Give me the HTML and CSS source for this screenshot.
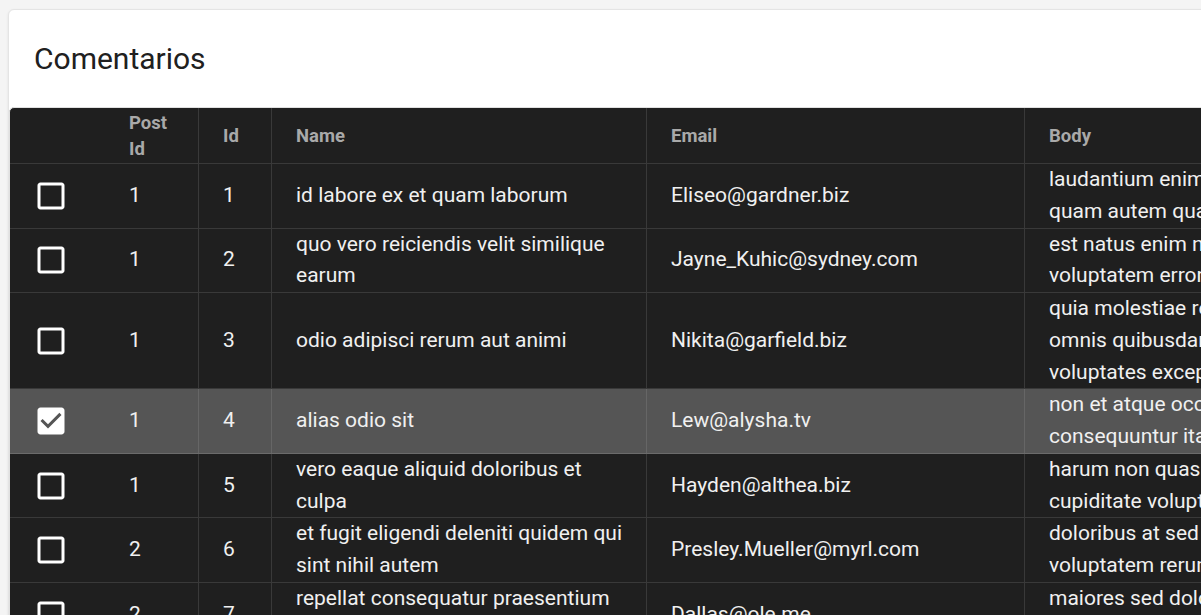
FILE: index.html
```html
<!DOCTYPE html>
<html lang="es">
<head>
<meta charset="utf-8">
<title>Comentarios</title>
<link rel="stylesheet" href="styles.css">
</head>
<body>
<div class="card">
  <div class="card-header"><h1 class="title">Comentarios</h1></div>
  <div class="grid">
    <div class="row head">
      <div class="cell check"></div>
      <div class="cell">Post Id</div>
      <div class="cell sep">Id</div>
      <div class="cell sep">Name</div>
      <div class="cell sep">Email</div>
      <div class="cell sep">Body</div>
    </div>

    <div class="row">
      <div class="cell check"><svg class="cb" viewBox="0 0 24 24"><path d="M19 5v14H5V5h14m0-2H5c-1.11 0-2 .9-2 2v14c0 1.1.89 2 2 2h14c1.1 0 2-.9 2-2V5c0-1.1-.9-2-2-2z"/></svg></div>
      <div class="cell">1</div>
      <div class="cell sep">1</div>
      <div class="cell sep">id labore ex et quam laborum</div>
      <div class="cell sep">Eliseo@gardner.biz</div>
      <div class="cell sep body">laudantium enim quasi est quidem magnam voluptate ipsam eos tempora quo necessitatibus dolor<br>quam autem quasi reiciendis et nam sapiente accusantium</div>
    </div>

    <div class="row">
      <div class="cell check"><svg class="cb" viewBox="0 0 24 24"><path d="M19 5v14H5V5h14m0-2H5c-1.11 0-2 .9-2 2v14c0 1.1.89 2 2 2h14c1.1 0 2-.9 2-2V5c0-1.1-.9-2-2-2z"/></svg></div>
      <div class="cell">1</div>
      <div class="cell sep">2</div>
      <div class="cell sep">quo vero reiciendis velit similique earum</div>
      <div class="cell sep">Jayne_Kuhic@sydney.com</div>
      <div class="cell sep body">est natus enim nihil est dolore omnis voluptatem numquam et omnis occaecati quod ullam at<br>voluptatem error expedita pariatur nihil sint nostrum voluptatem reiciendis et</div>
    </div>

    <div class="row">
      <div class="cell check"><svg class="cb" viewBox="0 0 24 24"><path d="M19 5v14H5V5h14m0-2H5c-1.11 0-2 .9-2 2v14c0 1.1.89 2 2 2h14c1.1 0 2-.9 2-2V5c0-1.1-.9-2-2-2z"/></svg></div>
      <div class="cell">1</div>
      <div class="cell sep">3</div>
      <div class="cell sep">odio adipisci rerum aut animi</div>
      <div class="cell sep">Nikita@garfield.biz</div>
      <div class="cell sep body">quia molestiae reprehenderit quasi aspernatur aut expedita occaecati aliquam eveniet laudantium<br>omnis quibusdam delectus saepe quia accusamus maiores nam est cum et ducimus et vero<br>voluptates excepturi deleniti ratione</div>
    </div>

    <div class="row selected">
      <div class="cell check"><svg class="cb" viewBox="0 0 24 24"><path d="M19 3H5c-1.11 0-2 .9-2 2v14c0 1.1.89 2 2 2h14c1.11 0 2-.9 2-2V5c0-1.1-.89-2-2-2zm-9 14l-5-5 1.41-1.410L10 14.170l7.59-7.59L19 8l-9 9z"/></svg></div>
      <div class="cell">1</div>
      <div class="cell sep">4</div>
      <div class="cell sep">alias odio sit</div>
      <div class="cell sep">Lew@alysha.tv</div>
      <div class="cell sep body">non et atque occaecati deserunt quas accusantium unde odit nobis qui voluptatem quia voluptas<br>consequuntur itaque dolor et qui rerum deleniti ut occaecati</div>
    </div>

    <div class="row">
      <div class="cell check"><svg class="cb" viewBox="0 0 24 24"><path d="M19 5v14H5V5h14m0-2H5c-1.11 0-2 .9-2 2v14c0 1.1.89 2 2 2h14c1.1 0 2-.9 2-2V5c0-1.1-.9-2-2-2z"/></svg></div>
      <div class="cell">1</div>
      <div class="cell sep">5</div>
      <div class="cell sep">vero eaque aliquid doloribus et culpa</div>
      <div class="cell sep">Hayden@althea.biz</div>
      <div class="cell sep body">harum non quasi et ratione tempore iure ex voluptates in ratione harum architecto fugit inventore<br>cupiditate voluptates magni quo et</div>
    </div>

    <div class="row">
      <div class="cell check"><svg class="cb" viewBox="0 0 24 24"><path d="M19 5v14H5V5h14m0-2H5c-1.11 0-2 .9-2 2v14c0 1.1.89 2 2 2h14c1.1 0 2-.9 2-2V5c0-1.1-.9-2-2-2z"/></svg></div>
      <div class="cell">2</div>
      <div class="cell sep">6</div>
      <div class="cell sep">et fugit eligendi deleniti quidem qui sint nihil autem</div>
      <div class="cell sep">Presley.Mueller@myrl.com</div>
      <div class="cell sep body">doloribus at sed quis culpa deserunt consectetur qui praesentium accusamus fugiat dicta<br>voluptatem rerum ut voluptate autem voluptatem repellendus aspernatur dolorem in</div>
    </div>

    <div class="row">
      <div class="cell check"><svg class="cb" viewBox="0 0 24 24"><path d="M19 5v14H5V5h14m0-2H5c-1.11 0-2 .9-2 2v14c0 1.1.89 2 2 2h14c1.1 0 2-.9 2-2V5c0-1.1-.9-2-2-2z"/></svg></div>
      <div class="cell">2</div>
      <div class="cell sep">7</div>
      <div class="cell sep">repellat consequatur praesentium vel minus molestias voluptatum</div>
      <div class="cell sep">Dallas@ole.me</div>
      <div class="cell sep body">maiores sed dolores similique labore et inventore et quasi temporibus esse sunt id et<br>eos voluptatem aliquam aliquid ratione corporis molestiae mollitia quia et magnam dolor</div>
    </div>
  </div>
</div>
</body>
</html>
```

FILE: styles.css
```css
html, body {
  margin: 0;
  padding: 0;
  overflow: hidden;
}
body {
  background: #f4f4f4;
  padding: 9px 0 0 8px;
  font-family: Roboto, "Liberation Sans", sans-serif;
}
.card {
  width: 2050px;
  background: #ffffff;
  border: 1px solid #e4e4e4;
  border-radius: 6px;
  box-shadow: 0 1px 3px rgba(0, 0, 0, 0.08);
}
.card-header {
  height: 97px;
  display: flex;
  align-items: center;
  padding-left: 25px;
}
.title {
  margin: 0;
  font-size: 30px;
  font-weight: 400;
  color: #202020;
  line-height: 36px;
}
.grid {
  background: #1f1f1f;
  border: 1px solid #e0e0e0;
  border-radius: 5px;
  color: #f0f0f0;
  font-size: 21px;
  line-height: 31.75px;
}
.row {
  display: grid;
  grid-template-columns: 95px 93px 73px 375px 378px 1000px;
  border-bottom: 1px solid #393939;
}
.row.head {
  height: 55px;
  color: #a9a9a9;
  font-size: 18.5px;
  font-weight: 700;
  line-height: 26px;
}
.row.selected {
  background: #555555;
  border-bottom-color: #6b6b6b;
}
.cell {
  display: flex;
  align-items: center;
  padding: 0 16px 0 24px;
  min-width: 0;
}
.sep {
  border-left: 1px solid #393939;
  padding-left: 24px;
}
.selected .sep {
  border-left-color: #666666;
}
.check {
  padding: 0 0 0 23px;
}
.body {
  white-space: nowrap;
  display: block;
  align-self: center;
}
.cb {
  width: 36px;
  height: 36px;
  fill: #ffffff;
  display: block;
}
```
